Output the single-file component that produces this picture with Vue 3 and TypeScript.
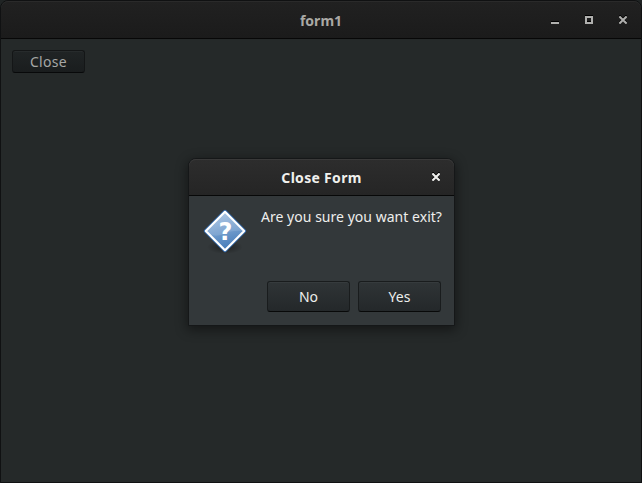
<script setup lang="ts">
import { ref } from 'vue'

const windowTitle = ref('form1')
const dialogTitle = ref('Close Form')
const message = ref('Are you sure you want exit?')
const answers: { label: string; cls: string }[] = [
  { label: 'No', cls: 'no' },
  { label: 'Yes', cls: 'yes' },
]
</script>

<template>
  <div class="window">
    <header class="titlebar">
      <span class="title"><span class="main-title">{{ windowTitle }}</span></span>
      <div class="controls">
        <svg width="8" height="8" viewBox="0 0 8 8" shape-rendering="crispEdges"><path d="M0 6h8v2H0z" fill="#b0b0ae" /></svg>
        <svg width="8" height="8" viewBox="0 0 8 8" shape-rendering="crispEdges"><path d="M1 1h6v6H1z" fill="none" stroke="#b0b0ae" stroke-width="2" /></svg>
        <svg width="8" height="8" viewBox="0 0 8 8"><path d="M.4.4l7.2 7.2M7.6.4L.4 7.6" stroke="#b0b0ae" stroke-width="2" /></svg>
      </div>
    </header>
    <main class="content">
      <button class="btn small"><span class="close-label">Close</span></button>
    </main>

    <section class="dialog" role="dialog">
      <header class="dialog-bar">
        <span class="title"><span class="dialog-title">{{ dialogTitle }}</span></span>
        <svg class="dialog-close" width="8" height="8" viewBox="0 0 8 8"><path d="M.4.4l7.2 7.2M7.6.4L.4 7.6" stroke="#f0f0ee" stroke-width="2.1" /></svg>
      </header>
      <div class="message-row">
        <svg class="question" width="46" height="48" viewBox="0 0 46 48">
          <defs>
            <linearGradient id="blue" x1="0" y1="0" x2=".25" y2="1">
              <stop offset="0" stop-color="#a9c5e5" />
              <stop offset="1" stop-color="#4a7fbb" />
            </linearGradient>
            <radialGradient id="shade">
              <stop offset="0" stop-color="#000" stop-opacity=".4" />
              <stop offset="1" stop-color="#000" stop-opacity="0" />
            </radialGradient>
          </defs>
          <ellipse cx="23" cy="39" rx="18" ry="7" fill="url(#shade)" />
          <path d="M23 3.6L42.4 23 23 42.4 3.6 23z" fill="url(#blue)" stroke="#2f67ab" stroke-width="3.6" stroke-linejoin="round" />
          <path d="M23 3.8L42.2 23 23 42.2 3.8 23z" fill="url(#blue)" stroke="#fff" stroke-width="2.2" stroke-linejoin="round" />
          <path d="M23 5.4L40.6 23Q30 22 22 26Q14 29 9 26.6L5.4 23z" fill="#fff" opacity=".12" />
          <text x="23.5" y="32" text-anchor="middle" fill="#fff" class="mark">?</text>
        </svg>
        <p class="message"><span>{{ message }}</span></p>
      </div>
      <footer class="actions">
        <button v-for="a in answers" :key="a.label" class="btn"><span :class="a.cls">{{ a.label }}</span></button>
      </footer>
    </section>
  </div>
</template>

<style>
body {
  margin: 0;
  background: #202424;
}
</style>

<style scoped>
.window {
  position: relative;
  box-sizing: border-box;
  width: 642px;
  height: 483px;
  border: 1px solid #101112;
  border-radius: 8px 8px 0 0;
  background: #252929;
  overflow: hidden;
  font-family: "Noto Sans", "Open Sans", sans-serif;
  font-size: 14px;
}
.titlebar {
  box-sizing: border-box;
  height: 38px;
  display: grid;
  grid-template-columns: 1fr;
  align-items: center;
  border-bottom: 1px solid #070707;
  border-radius: 7px 7px 0 0;
  box-shadow: inset 0 1px #2a2a2a;
  background: linear-gradient(#212121, #1b1b1b);
}
.title {
  grid-area: 1 / 1;
  text-align: center;
  font-weight: 700;
  line-height: 20px;
}
.main-title {
  color: #aaa9a5;
}
.titlebar .title {
  padding-top: 2px;
}
.controls {
  grid-area: 1 / 1;
  justify-self: end;
  display: flex;
  gap: 26px;
  padding-right: 14px;
}
.controls svg,
.dialog-close {
  display: block;
  filter: drop-shadow(0 -1px 0 #000);
}
.content {
  padding: 11px;
}
.btn {
  box-sizing: border-box;
  width: 83px;
  height: 31px;
  padding: 0;
  display: flex;
  align-items: center;
  justify-content: center;
  border: 1px solid #191c1d;
  border-bottom-color: #080909;
  border-radius: 3px;
  background: linear-gradient(#2f3436, #24282a);
  box-shadow: inset 0 1px #363b3d;
  color: #eeeeec;
  font: 14px/20px "Noto Sans", "Open Sans", sans-serif;
}
.small {
  width: 73px;
  height: 23px;
  border-color: #141617;
  border-bottom-color: #08090a;
  background: linear-gradient(#202425, #1a1d1e);
  box-shadow: inset 0 1px #272b2c;
  color: #a6a7a5;
}
.close-label {
  letter-spacing: .3px;
}
.dialog {
  position: absolute;
  left: 187px;
  top: 157px;
  box-sizing: border-box;
  width: 267px;
  height: 168px;
  border: 1px solid #151718;
  border-radius: 8px 8px 0 0;
  background: #33383a;
  box-shadow: 0 3px 12px 1px rgba(0, 0, 0, .45);
}
.dialog-bar {
  box-sizing: border-box;
  height: 37px;
  display: grid;
  align-items: center;
  border-bottom: 1px solid #070808;
  border-radius: 7px 7px 0 0;
  background: linear-gradient(#2d2d2d, #252525);
  box-shadow: inset 0 1px #393939;
}
.dialog-bar .title {
  padding-top: 2px;
}
.dialog-title {
  color: #f0f0ed;
  letter-spacing: .3px;
}
.dialog-close {
  grid-area: 1 / 1;
  justify-self: end;
  margin-right: 14px;
}
.message-row {
  display: flex;
  gap: 13px;
  padding: 12px 10px 0 13px;
}
.question {
  flex: none;
  display: block;
}
.mark {
  font: 700 24px "DejaVu Sans", sans-serif;
}
.message {
  margin: -1px 0 0;
  white-space: nowrap;
  line-height: 20px;
  letter-spacing: .03px;
  color: #eeeeec;
}
.actions {
  display: flex;
  justify-content: flex-end;
  gap: 8px;
  padding: 25px 13px 0 0;
}
</style>
